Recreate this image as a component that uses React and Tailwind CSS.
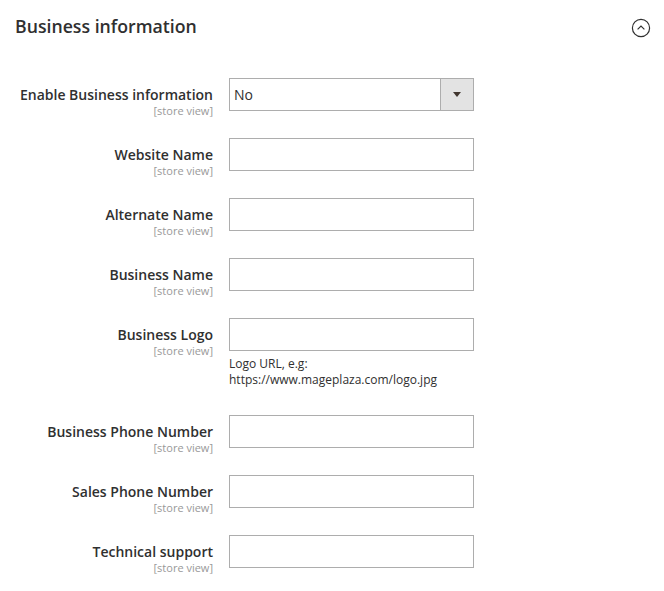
import React from "react";

const fields = [
  { label: "Website Name" },
  { label: "Alternate Name" },
  { label: "Business Name" },
  { label: "Business Logo", note: ["Logo URL, e.g:", "https://www.mageplaza.com/logo.jpg"] },
  { label: "Business Phone Number" },
  { label: "Sales Phone Number" },
  { label: "Technical support" },
];

function Label({ text }) {
  return (
    <div className="w-[213px] shrink-0 text-right pt-[8px] mb-[-6px]">
      <div className="text-[14px] leading-[18px] font-semibold text-[#303030]">{text}</div>
      <div className="text-[11px] leading-[13px] text-[#999999]">[store view]</div>
    </div>
  );
}

export default function App() {
  return (
    <div className="w-[664px] h-[591px] bg-white overflow-hidden" style={{ fontFamily: '"Open Sans", sans-serif' }}>
      <div className="flex items-center justify-between pl-[15px] pr-[13px] pt-[14px]">
        <h2 className="text-[17.7px] leading-[24px] font-semibold text-[#303030]">Business information</h2>
        <svg width="20" height="20" viewBox="0 0 20 20" className="mt-[3px]">
          <circle cx="10" cy="10" r="8.6" fill="none" stroke="#303030" strokeWidth="1.2" />
          <path d="M6.6 11.4 L10 8 L13.4 11.4" fill="none" stroke="#303030" strokeWidth="1.2" />
        </svg>
      </div>
      <div className="mt-[40px] flex flex-col gap-[27px]">
        <div className="flex gap-[16px]">
          <Label text="Enable Business information" />
          <div className="w-[245px] h-[33px] border border-[#adadad] flex">
            <div className="flex-1 pl-[4px] text-[14px] leading-[31px] text-[#303030]">No</div>
            <div className="w-[33px] h-full bg-[#e3e3e3] border-l border-[#adadad] flex items-center justify-center">
              <div className="w-0 h-0 border-l-[4px] border-r-[4px] border-t-[5px] border-l-transparent border-r-transparent border-t-[#41362f]" />
            </div>
          </div>
        </div>
        {fields.map((f) => (
          <div key={f.label} className="flex gap-[16px]">
            <Label text={f.label} />
            <div>
              <div className="w-[245px] h-[33px] border border-[#adadad] bg-white" />
              {f.note && (
                <div className="mt-[5px] text-[12px] leading-[16px] text-[#303030]">
                  {f.note.map((n) => (
                    <div key={n}>{n}</div>
                  ))}
                </div>
              )}
            </div>
          </div>
        ))}
      </div>
    </div>
  );
}
